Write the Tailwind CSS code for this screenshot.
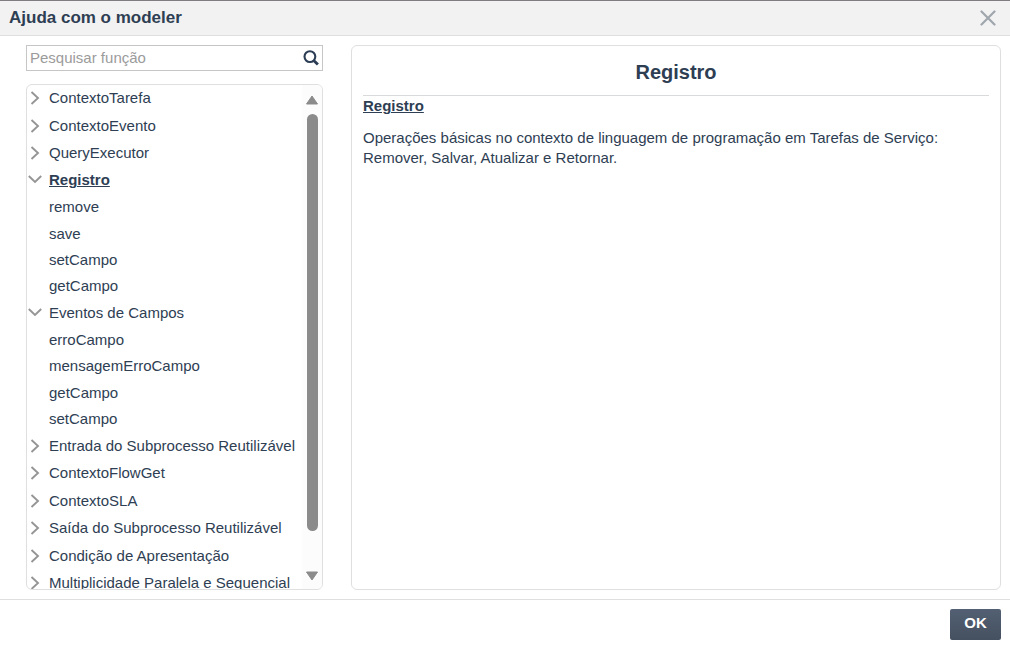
<!DOCTYPE html>
<html lang="pt-BR">
<head>
<meta charset="utf-8">
<meta name="viewport" content="width=device-width, initial-scale=1">
<title>Ajuda com o modeler</title>
<script src="https://cdn.jsdelivr.net/npm/@tailwindcss/browser@4"></script>
</head>
<body class="flex h-screen flex-col bg-white font-['Liberation_Sans',Arial,sans-serif] text-[15px] text-[#2e3e53]">
<svg class="hidden" aria-hidden="true">
  <symbol id="right" viewBox="0 0 14 14"><path d="M3.500 1l6.500 6-6.500 6" fill="none" stroke="#959595" stroke-width="1.900"/></symbol>
  <symbol id="down" viewBox="0 0 14 14"><path d="M.8 3L7 9l6.200-6" fill="none" stroke="#959595" stroke-width="1.900"/></symbol>
</svg>
<header class="flex h-9 shrink-0 items-center justify-between border-t border-b border-t-[#807c80] border-b-[#dfdfdf] bg-[#f2f2f2] pr-3 pb-px pl-[9px]">
  <h1 class="text-[17px] leading-5 font-bold">Ajuda com o modeler</h1>
  <button type="button" aria-label="Fechar" class="flex size-5 items-center justify-center">
    <svg class="size-4" viewBox="0 0 16 16"><path d="M1.500 1.500l13 13M14.500 1.500l-13 13" stroke="#a0a6ae" stroke-width="2.200" stroke-linecap="round"/></svg>
  </button>
</header>
<main class="flex min-h-0 flex-1 gap-7 py-[9px] pr-[9px] pl-[26px]">
  <aside class="flex w-[297px] shrink-0 flex-col gap-[13px]">
    <form class="flex h-[26px] shrink-0 items-center border border-[#c6c6c6] pr-[3px] pl-[3px]">
      <input type="text" aria-label="Pesquisar função" placeholder="Pesquisar função" class="min-w-0 flex-1 leading-5 outline-none placeholder:text-[#9b9b9b]">
      <button type="button" aria-label="Pesquisar" class="shrink-0">
        <svg class="size-4" viewBox="0 0 16 16" fill="none" stroke="#2b3d54"><circle cx="6.900" cy="6.600" r="5.400" stroke-width="2.100"/><path d="M10.700 10.400l4.200 4.200" stroke-width="2.800"/></svg>
      </button>
    </form>
    <div class="flex min-h-0 flex-1 overflow-hidden rounded-md border border-[#dfdfdf]">
      <div class="min-w-0 flex-1 overflow-hidden">
        <ul id="tree" role="tree" aria-label="Funções" class="flex h-[512px] flex-col"></ul>
      </div>
      <div class="flex w-5 shrink-0 flex-col items-center bg-[#fcfcfc] pt-2.5 pb-2" aria-hidden="true">
        <svg class="h-2.5 w-3 shrink-0" viewBox="0 0 12 10"><path d="M6 1L11.500 9H.5z" fill="#8b8b8b" stroke="#8b8b8b" stroke-linejoin="round"/></svg>
        <div class="mt-[9px] flex flex-1 flex-col">
          <div class="h-[417px] w-[11px] rounded-full bg-[#8b8b8b]"></div>
        </div>
        <svg class="h-2.5 w-3 shrink-0" viewBox="0 0 12 10"><path d="M6 9L11.500 1H.5z" fill="#8b8b8b" stroke="#8b8b8b" stroke-linejoin="round"/></svg>
      </div>
    </div>
  </aside>
  <section class="min-w-0 flex-1 rounded-md border border-[#dfdfdf] px-[11px]">
    <h2 class="flex h-[50px] items-center justify-center border-b border-[#d8dadc] pt-0.5 text-xl font-bold">Registro</h2>
    <h3 class="leading-5 font-bold underline">Registro</h3>
    <p class="mt-3 leading-5">Operações básicas no contexto de linguagem de programação em Tarefas de Serviço:<br>Remover, Salvar, Atualizar e Retornar.</p>
  </section>
</main>
<footer class="flex shrink-0 justify-end border-t border-[#dfdfdf] pt-[9px] pr-[9px] pb-[5px]">
  <button type="button" class="h-[31px] w-[51px] rounded-xs bg-linear-to-b from-[#536073] to-[#455160] pb-0.5 font-bold text-white">OK</button>
</footer>
<script>
const items = [
  ['ContextoTarefa', 'right'], ['ContextoEvento', 'right'], ['QueryExecutor', 'right'],
  ['Registro', 'down', true], ['remove'], ['save'], ['setCampo'], ['getCampo'],
  ['Eventos de Campos', 'down'], ['erroCampo'], ['mensagemErroCampo'], ['getCampo'], ['setCampo'],
  ['Entrada do Subprocesso Reutilizável', 'right'], ['ContextoFlowGet', 'right'], ['ContextoSLA', 'right'],
  ['Saída do Subprocesso Reutilizável', 'right'], ['Condição de Apresentação', 'right'],
  ['Multiplicidade Paralela e Sequencial', 'right']
];
document.getElementById('tree').innerHTML = items.map(([name, icon, selected]) => `
  <li role="treeitem" aria-level="${icon ? 1 : 2}" ${icon ? `aria-expanded="${icon === 'down'}"` : ''} class="flex shrink-0 grow ${icon ? 'basis-[27px]' : 'basis-[26px]'}">
    <button type="button" class="flex w-full items-center gap-[7px] pb-px pl-px text-left leading-5 whitespace-nowrap">
      <svg class="size-3.5 shrink-0">${icon ? `<use href="#${icon}"/>` : ''}</svg>
      <span class="${selected ? 'font-bold underline' : ''}">${name}</span>
    </button>
  </li>`).join('');
</script>
</body>
</html>
